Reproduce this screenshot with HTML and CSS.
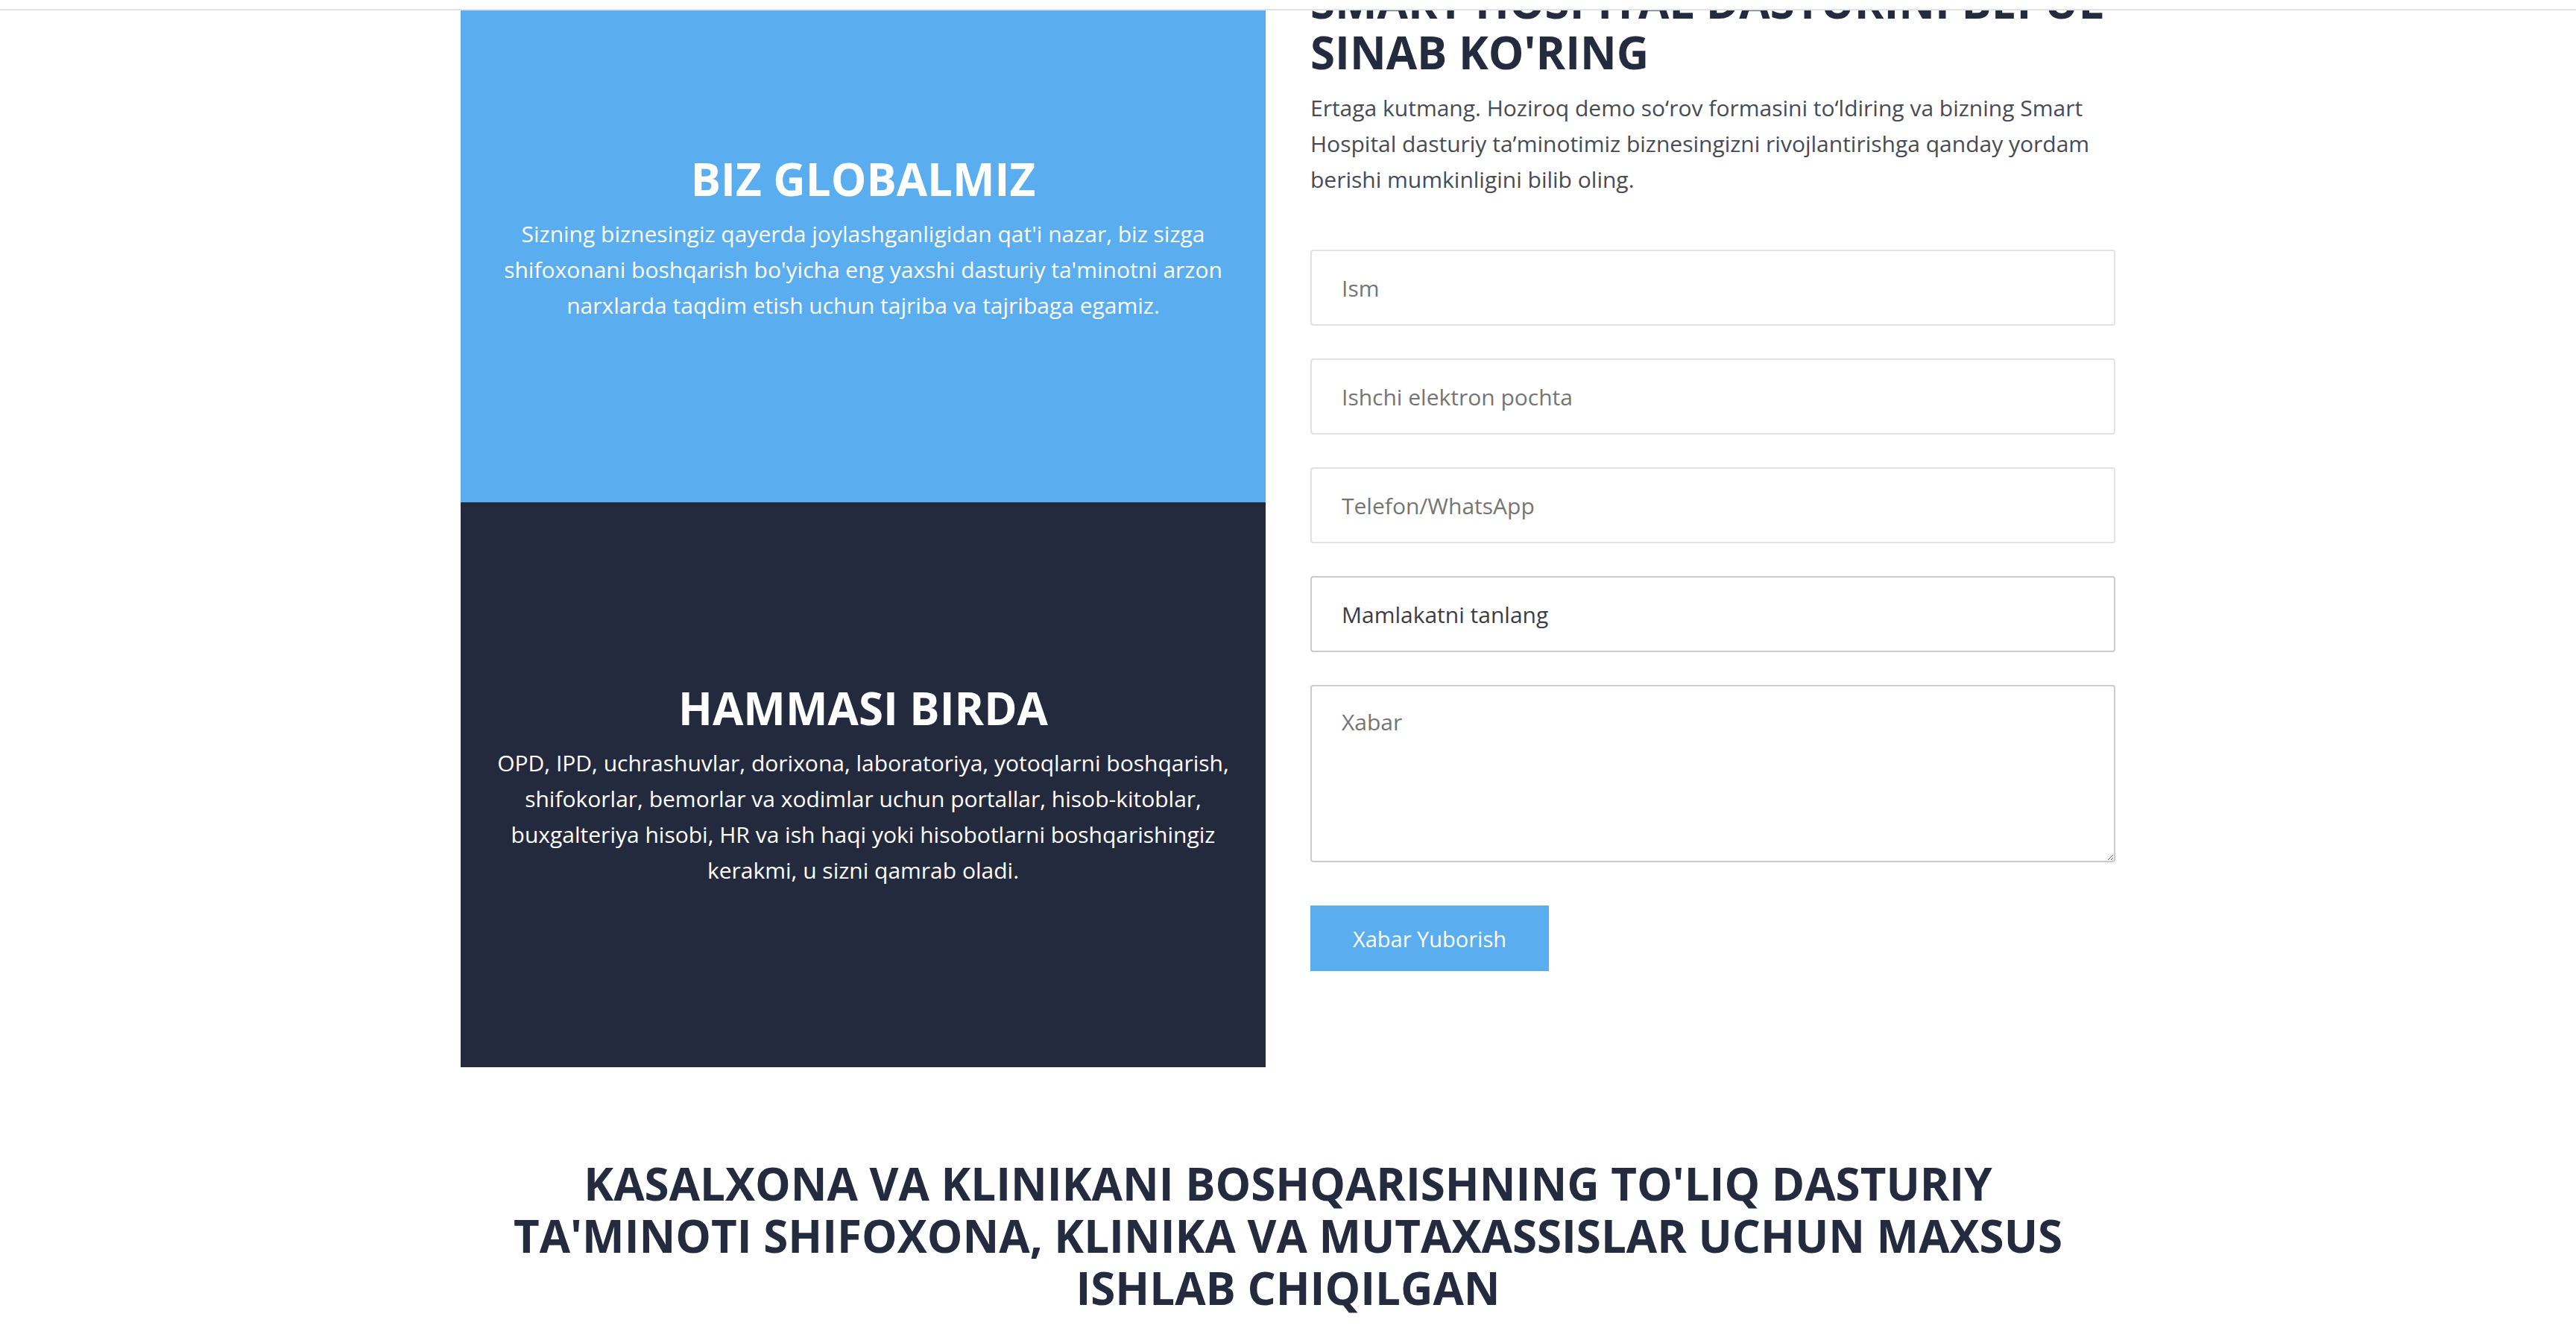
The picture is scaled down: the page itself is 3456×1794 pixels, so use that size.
FILE: index.html
```html
<!DOCTYPE html>
<html lang="uz">
<head>
<meta charset="utf-8">
<title>Smart Hospital</title>
<link rel="stylesheet" href="styles.css">
</head>
<body>
<header class="topbar"></header>
<main class="page">
  <section class="demo">
    <div class="panels">
      <div class="panel panel-blue">
        <h2 class="panel-title">BIZ GLOBALMIZ</h2>
        <p class="panel-text">Sizning biznesingiz qayerda joylashganligidan qat'i nazar, biz sizga shifoxonani boshqarish bo'yicha eng yaxshi dasturiy ta'minotni arzon narxlarda taqdim etish uchun tajriba va tajribaga egamiz.</p>
      </div>
      <div class="panel panel-dark">
        <h2 class="panel-title">HAMMASI BIRDA</h2>
        <p class="panel-text">OPD, IPD, uchrashuvlar, dorixona, laboratoriya, yotoqlarni boshqarish, shifokorlar, bemorlar va xodimlar uchun portallar, hisob-kitoblar, buxgalteriya hisobi, HR va ish haqi yoki hisobotlarni boshqarishingiz kerakmi, u sizni qamrab oladi.</p>
      </div>
    </div>
    <div class="form-col">
      <h2 class="form-title">SMART HOSPITAL DASTURINI BEPUL SINAB KO'RING</h2>
      <p class="lead">Ertaga kutmang. Hoziroq demo so‘rov formasini to‘ldiring va bizning Smart Hospital dasturiy ta’minotimiz biznesingizni rivojlantirishga qanday yordam berishi mumkinligini bilib oling.</p>
      <form class="demo-form">
        <input class="field" type="text" placeholder="Ism">
        <input class="field" type="email" placeholder="Ishchi elektron pochta">
        <input class="field" type="text" placeholder="Telefon/WhatsApp">
        <select class="field field-select">
          <option>Mamlakatni tanlang</option>
        </select>
        <textarea class="field field-area" placeholder="Xabar"></textarea>
        <button class="send-btn" type="button">Xabar Yuborish</button>
      </form>
    </div>
  </section>
  <section class="intro">
    <h2 class="intro-title">KASALXONA VA KLINIKANI BOSHQARISHNING TO'LIQ DASTURIY TA'MINOTI SHIFOXONA, KLINIKA VA MUTAXASSISLAR UCHUN MAXSUS ISHLAB CHIQILGAN</h2>
  </section>
</main>
</body>
</html>
```

FILE: styles.css
```css
html, body {
  margin: 0;
  padding: 0;
  background: #ffffff;
  font-family: "Open Sans", "Noto Sans", sans-serif;
  overflow: hidden;
}

.topbar {
  position: fixed;
  top: 0;
  left: 0;
  right: 0;
  height: 12px;
  background: #ffffff;
  border-bottom: 2px solid #e2e2e2;
  z-index: 10;
}

.page {
  margin-top: -36px;
}

.demo {
  width: 2220px;
  margin: 0 auto;
  display: grid;
  grid-template-columns: 1080px 1080px;
  column-gap: 60px;
  align-items: start;
}

.panels {
  display: flex;
  flex-direction: column;
}

.panel {
  padding: 240px 36px;
  text-align: center;
  color: #ffffff;
}

.panel-blue {
  background: #5aadee;
}

.panel-dark {
  background: #242a3d;
}

.panel-title {
  margin: 0 0 14px;
  font-size: 60px;
  line-height: 72px;
  font-weight: 700;
}

.panel-text {
  margin: 0;
  font-size: 30px;
  line-height: 48px;
}

.form-col {
  display: flex;
  flex-direction: column;
}

.form-title {
  margin: 4px 0 17px;
  font-size: 60px;
  line-height: 68px;
  font-weight: 700;
  color: #252b3e;
}

.lead {
  margin: 0 0 70px;
  font-size: 30px;
  line-height: 48px;
  color: #484b55;
}

.demo-form {
  display: flex;
  flex-direction: column;
  align-items: flex-start;
}

.field {
  box-sizing: border-box;
  width: 100%;
  height: 102px;
  margin: 0 0 44px;
  padding: 0 40px;
  border: 2px solid #e2e2e2;
  border-radius: 4px;
  background: #ffffff;
  font-family: "Open Sans", "Noto Sans", sans-serif;
  font-size: 30px;
  color: #333333;
  outline: none;
}

.field::placeholder {
  color: #757575;
}

.field-select {
  -webkit-appearance: none;
  appearance: none;
  border-color: #cccccc;
  color: #3a3d47;
}

.field-area {
  height: 238px;
  padding: 28px 40px;
  border-color: #cccccc;
  line-height: 40px;
  resize: vertical;
}

.send-btn {
  margin-top: 14px;
  width: 320px;
  height: 88px;
  border: none;
  background: #5aadee;
  color: #ffffff;
  font-family: "Open Sans", "Noto Sans", sans-serif;
  font-size: 29px;
  cursor: pointer;
}

.intro {
  margin: 121px auto 0;
  width: 2160px;
}

.intro-title {
  margin: 0;
  text-align: center;
  font-size: 60px;
  line-height: 70px;
  font-weight: 700;
  color: #252b3e;
}
```
